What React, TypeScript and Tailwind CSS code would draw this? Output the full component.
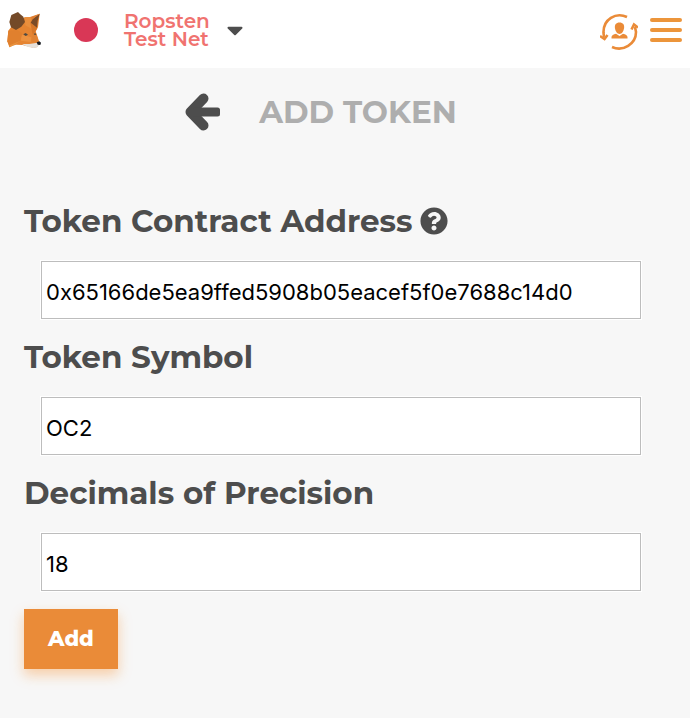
import { useState } from 'react'
import { FaCaretDown, FaQuestionCircle } from 'react-icons/fa'

function FoxLogo() {
  return (
    <svg viewBox="21 33 105 114" className="h-[38px] w-[35px]" aria-hidden="true">
      <path d="M25 92 34 80 74 52 96 51 119 41 114 82 107 94 112 108 117 124 112 141 100 143 82 139 68 135 48 134 38 137 28 142 25 132 22 124Z" fill="#e58431" />
      <path d="M25 92 52 90 66 100 62 122 28 138 22 124Z" fill="#e0802e" />
      <path d="M62 122 38 137 28 142 29 136Z" fill="#e8943f" />
      <path d="M74 52 96 51 91 66 97 88 76 76Z" fill="#ea8f3c" />
      <path d="M66 104 94 112 92 126 62 122Z" fill="#ec9240" />
      <path d="M91 68 112 84 107 94 98 104Z" fill="#d77729" />
      <path d="M96 108 107 98 116 124 98 128Z" fill="#e08233" />
      <path d="M66 132 88 132 112 128 118 134 112 142 100 144 82 140Z" fill="#e6e0da" />
      <path d="M54 36 60 42 70 50 75 66 64 80 48 90 33 82 28 66 34 45Z" fill="#744a28" />
      <path d="M119 41 113 62 111 83 92 68 98 58Z" fill="#7a4b27" />
      <path d="M119 41 97 57 90 51Z" fill="#df7e31" />
      <path d="M70 103 77 99 84 104 77 108Z" fill="#4d4a44" />
      <path d="M101 102 106 99 109 104 104 105Z" fill="#5c4c3b" />
      <path d="M110 127 118 124 123 128 121 135 113 134Z" fill="#191b20" />
    </svg>
  )
}

function SwitchAccountIcon() {
  return (
    <svg viewBox="0 0 38 38" className="size-[38px]" fill="none" stroke="#ea8b38" strokeWidth="2.6" aria-hidden="true">
      <path d="M27 4C16-1 3 6 3.500 20l.5 4" />
      <path d="M0 23 4.500 26l3-4" />
      <path d="M12 34c11 5 24-3 24-15l-1-5" />
      <path d="M31.500 16.500 34 11.500l4 3" />
      <g fill="#ea8b38" stroke="none">
        <path d="M19.500 9.500c3.500 0 5 2.300 4.600 5.500-.4 3-2.300 6-4.600 6s-4.200-3-4.600-6C14.500 11.800 16 9.500 19.500 9.500Z" />
        <path d="M11.500 25.500V24c0-1.500 2-2.500 4.500-3.200l3.500 2.200 3.500-2.200c2.500.7 4.500 1.700 4.500 3.200v1.500Z" />
      </g>
    </svg>
  )
}

function BackArrow() {
  return (
    <svg viewBox="0 0 36 38" className="h-[38px] w-9" fill="none" stroke="#4d4d4d" strokeLinecap="round" strokeLinejoin="round" aria-hidden="true">
      <path d="M18.500 5.500 5.500 19l13 13.500" strokeWidth="10" />
      <rect x="8" y="14.500" width="27" height="9" rx="2.500" fill="#4d4d4d" stroke="none" />
    </svg>
  )
}

interface FieldProps {
  id: string
  label: string
  value: string
  onChange: (value: string) => void
  help?: boolean
}

function Field({ id, label, value, onChange, help }: FieldProps) {
  return (
    <div className="mb-[18px]">
      <div className="flex h-[60px] items-start gap-2 text-[#4d4d4d]">
        <label htmlFor={id} className="text-[31px] leading-10 font-bold">
          {label}
        </label>
        {help && <FaQuestionCircle className="mt-[6px] size-7" />}
      </div>
      <div className="mr-px ml-[17px]">
        <input
          id={id}
          type="text"
          value={value}
          onChange={(e) => onChange(e.target.value)}
          className="block h-[58px] w-full border border-[#bdbdbd] bg-white px-1 pt-1 font-['Inter',sans-serif] text-[22px] text-black outline-1 outline-white"
        />
      </div>
    </div>
  )
}

export default function App() {
  const [address, setAddress] = useState('0x65166de5ea9ffed5908b05eacef5f0e7688c14d0')
  const [symbol, setSymbol] = useState('OC2')
  const [decimals, setDecimals] = useState('18')

  return (
    <div className="min-h-screen bg-[#f7f7f7] font-['Montserrat','Inter',sans-serif]">
      <header className="flex h-[68px] items-start justify-between bg-white pt-[11px] pr-2 pl-[7px]">
        <div className="flex items-start">
          <FoxLogo />
          <button type="button" className="ml-8 flex items-center pt-px text-left">
            <span className="size-6 rounded-full bg-[#d93756]" />
            <span className="ml-[26px] text-xl leading-[18px] font-semibold text-[#f07370]">
              Ropsten
              <br />
              Test Net
            </span>
            <FaCaretDown className="ml-3 size-[26px] text-[#4d4d4d]" />
          </button>
        </div>
        <div className="flex items-start gap-3">
          <button type="button" aria-label="Switch account" className="mt-[2px]">
            <SwitchAccountIcon />
          </button>
          <button type="button" aria-label="Menu" className="mt-[7px] flex w-8 flex-col gap-[6px]">
            <span className="h-1 rounded-full bg-[#ec953b]" />
            <span className="h-1 rounded-full bg-[#ec953b]" />
            <span className="h-1 rounded-full bg-[#ec953b]" />
          </button>
        </div>
      </header>

      <div className="flex items-center justify-center gap-[38px] pt-6 pr-12">
        <button type="button" aria-label="Back">
          <BackArrow />
        </button>
        <h2 className="text-[31px] leading-10 font-bold text-[#aeaeae]">ADD TOKEN</h2>
      </div>

      <form className="px-6 pt-[69px]" onSubmit={(e) => e.preventDefault()}>
        <div className="mr-6">
          <Field id="address" label="Token Contract Address" value={address} onChange={setAddress} help />
          <Field id="symbol" label="Token Symbol" value={symbol} onChange={setSymbol} />
          <Field id="decimals" label="Decimals of Precision" value={decimals} onChange={setDecimals} />
        </div>
        <button
          type="submit"
          className="h-[60px] bg-[#ea8b38] px-6 text-[21px] font-extrabold text-white shadow-[0_6px_12px_rgba(247,134,28,0.36)]"
        >
          Add
        </button>
      </form>
    </div>
  )
}
